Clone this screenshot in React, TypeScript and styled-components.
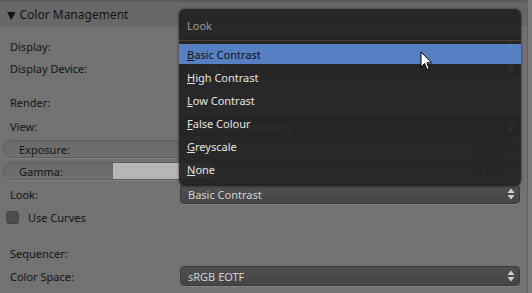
import React from "react";
import styled, { createGlobalStyle } from "styled-components";

const GlobalStyle = createGlobalStyle`
  html, body { margin: 0; padding: 0; background: #727272; }
  body {
    width: 532px; height: 293px; overflow: hidden;
    font-family: "Noto Sans", "DejaVu Sans", sans-serif;
  }
`;

const Screen = styled.div`
  position: relative;
  display: flex;
  width: 532px;
  height: 293px;
  background: #727272;
  overflow: hidden;
`;

const Panel = styled.div`
  flex: 1;
  display: flex;
  flex-direction: column;
  border-top: 2px solid #595959;
`;

const RightEdge = styled.div`
  width: 4px;
  border-left: 1px solid #606060;
  background: #7c7c7c;
`;

const Header = styled.div`
  height: 24px;
  display: flex;
  align-items: center;
  gap: 4px;
  padding-left: 7px;
  background: #686868;
  color: #141414;
  font-size: 12px;
`;

const Tri = styled.span`
  font-size: 11px;
  line-height: 1;
`;

const Row = styled.div<{ $mt?: number; $h?: number }>`
  display: flex;
  align-items: center;
  height: ${(p) => p.$h ?? 22}px;
  margin-top: ${(p) => p.$mt ?? 0}px;
  padding-right: 7px;
  font-size: 11px;
  color: #141414;
`;

const Label = styled.div`
  width: 180px;
  padding-left: 10px;
  box-sizing: border-box;
  flex-shrink: 0;
`;

const Field = styled.div`
  flex: 1;
  height: 20px;
  box-sizing: border-box;
  display: flex;
  align-items: center;
  justify-content: space-between;
  padding: 0 4px 0 7px;
  border: 1px solid #3b3b3b;
  border-radius: 4px;
  background: linear-gradient(#4f4f4f, #454545);
  box-shadow: 0 1px 0 rgba(255, 255, 255, 0.12);
  color: #d2d2d2;
  font-size: 11px;
`;

const Slider = styled.div`
  position: relative;
  flex: 1;
  height: 18px;
  margin-left: 3px;
  box-sizing: border-box;
  display: flex;
  align-items: center;
  justify-content: space-between;
  padding: 0 14px 0 15px;
  border: 1px solid #5c5c5c;
  border-radius: 9px;
  background: linear-gradient(#6a6a6a, #707070);
  box-shadow: 0 1px 0 rgba(255, 255, 255, 0.1);
  overflow: hidden;
  color: #141414;
  font-size: 11px;
`;

const SliderFill = styled.div`
  position: absolute;
  left: 109px;
  top: 0;
  bottom: 0;
  width: 100px;
  background: #b6b6b6;
`;

const SliderText = styled.span`
  position: relative;
`;

const Check = styled.div`
  width: 13px;
  height: 13px;
  margin-left: 6px;
  margin-right: 9px;
  box-sizing: border-box;
  border-radius: 3px;
  border: 1px solid #454545;
  background: #4d4d4d;
`;

const Popup = styled.div`
  position: absolute;
  left: 179px;
  top: 9px;
  width: 342px;
  height: 177px;
  box-sizing: border-box;
  border-radius: 6px;
  background: rgba(34, 34, 34, 0.93);
  box-shadow: 0 0 3px rgba(0, 0, 0, 0.6);
  display: flex;
  flex-direction: column;
  font-size: 11px;
`;

const PopupTitle = styled.div`
  height: 32px;
  display: flex;
  align-items: center;
  padding: 1px 0 0 8px;
  box-sizing: border-box;
  color: #9a9a9a;
  border-bottom: 1px solid #4e4035;
`;

const Items = styled.div`
  display: flex;
  flex-direction: column;
  gap: 3px;
  padding-top: 3px;
`;

const Item = styled.div<{ $active?: boolean }>`
  height: 20px;
  display: flex;
  align-items: center;
  padding-left: 8px;
  background: ${(p) => (p.$active ? "#5680c2" : "transparent")};
  color: ${(p) => (p.$active ? "#101010" : "#e4e4e4")};
`;

const Cursor = styled.svg`
  position: absolute;
  left: 420px;
  top: 51px;
`;

const Arrows = () => (
  <svg width="8" height="12" viewBox="0 0 8 12">
    <path d="M4 0.5 L7.5 5 L0.5 5 Z" fill="#cfcfcf" />
    <path d="M4 11.5 L7.5 7 L0.5 7 Z" fill="#cfcfcf" />
  </svg>
);

const Mnemonic = ({ text }: { text: string }) => (
  <span>
    <u>{text[0]}</u>
    {text.slice(1)}
  </span>
);

const items = ["Basic Contrast", "High Contrast", "Low Contrast", "False Colour", "Greyscale", "None"];

export default function App() {
  return (
    <Screen>
      <GlobalStyle />
      <Panel>
        <Header>
          <Tri>▼</Tri>
          <span>Color Management</span>
        </Header>
        <Row $mt={9}>
          <Label>Display:</Label>
          <Field>
            <span>sRGB</span>
            <Arrows />
          </Field>
        </Row>
        <Row>
          <Label>Display Device:</Label>
          <Field>
            <span>Filmlike</span>
            <Arrows />
          </Field>
        </Row>
        <Row $mt={12}>
          <Label>Render:</Label>
        </Row>
        <Row $mt={2}>
          <Label>View:</Label>
          <Field>
            <span>Filmic Log Encoding</span>
            <Arrows />
          </Field>
        </Row>
        <Row $mt={3} $h={18}>
          <Slider>
            <SliderText>Exposure:</SliderText>
            <SliderText>0.000</SliderText>
          </Slider>
        </Row>
        <Row $mt={4} $h={18}>
          <Slider>
            <SliderFill />
            <SliderText>Gamma:</SliderText>
            <SliderText>1.000</SliderText>
          </Slider>
        </Row>
        <Row $mt={3}>
          <Label>Look:</Label>
          <Field>
            <span>Basic Contrast</span>
            <Arrows />
          </Field>
        </Row>
        <Row $mt={1}>
          <Check />
          <span>Use Curves</span>
        </Row>
        <Row $mt={14}>
          <Label>Sequencer:</Label>
        </Row>
        <Row $mt={1}>
          <Label>Color Space:</Label>
          <Field>
            <span>sRGB EOTF</span>
            <Arrows />
          </Field>
        </Row>
      </Panel>
      <RightEdge />
      <Popup>
        <PopupTitle>Look</PopupTitle>
        <Items>
          {items.map((t, i) => (
            <Item key={t} $active={i === 0}>
              <Mnemonic text={t} />
            </Item>
          ))}
        </Items>
      </Popup>
      <Cursor width="13" height="20" viewBox="0 0 13 20">
        <path
          d="M1 1 L1 16 L4.5 12.5 L7 18.5 L9.2 17.5 L6.8 11.8 L11.5 11.8 Z"
          fill="#ffffff"
          stroke="#000000"
          strokeWidth="1"
          strokeLinejoin="round"
        />
      </Cursor>
    </Screen>
  );
}
